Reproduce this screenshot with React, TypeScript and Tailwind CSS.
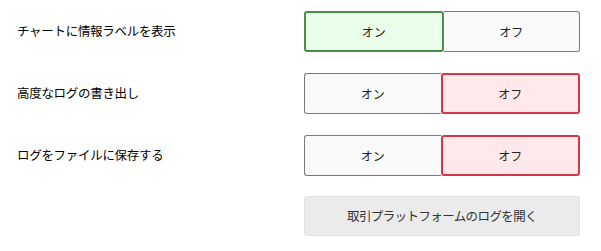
import { useState } from 'react';

type Setting = { id: string; label: string; on: boolean };

const initial: Setting[] = [
  { id: 'chart', label: 'チャートに情報ラベルを表示', on: true },
  { id: 'verbose', label: '高度なログの書き出し', on: false },
  { id: 'file', label: 'ログをファイルに保存する', on: false },
];

function Toggle({ on, onChange }: { on: boolean; onChange: (v: boolean) => void }) {
  return (
    <div className="flex h-[41px] w-[276px]">
      <button
        onClick={() => onChange(true)}
        className={`flex-1 rounded-l-[3px] text-[12px] text-[#222] ${
          on
            ? 'border-2 border-[#4b8b4b] bg-[#eaffea] rounded-r-[3px]'
            : 'border border-r-0 border-[#7a7a7a] bg-[#fafafa]'
        }`}
      >
        オン
      </button>
      <button
        onClick={() => onChange(false)}
        className={`flex-1 rounded-r-[3px] text-[12px] text-[#222] ${
          !on
            ? 'border-2 border-[#d2384a] bg-[#ffe8ea] rounded-l-[3px]'
            : 'border border-l-0 border-[#7a7a7a] bg-[#fafafa]'
        }`}
      >
        オフ
      </button>
    </div>
  );
}

export default function App() {
  const [settings, setSettings] = useState(initial);

  return (
    <div
      className="flex h-[251px] w-[601px] flex-col bg-white pt-[11px]"
      style={{ fontFamily: '"Noto Sans CJK JP", "Noto Sans", sans-serif' }}
    >
      <div className="flex flex-col gap-[21px]">
        {settings.map((s) => (
          <div key={s.id} className="flex items-center">
            <span className="w-[304px] pl-[17px] text-[12.5px] tracking-[-0.3px] text-black">
              {s.label}
            </span>
            <Toggle
              on={s.on}
              onChange={(v) =>
                setSettings((prev) => prev.map((p) => (p.id === s.id ? { ...p, on: v } : p)))
              }
            />
          </div>
        ))}
      </div>
      <div className="mt-[20px] pl-[304px]">
        <button className="h-[40px] w-[276px] rounded-[3px] border border-[#e2e2e2] bg-[#ebebeb] text-[12.5px] tracking-[-0.6px] text-[#333]">
          取引プラットフォームのログを開く
        </button>
      </div>
    </div>
  );
}
